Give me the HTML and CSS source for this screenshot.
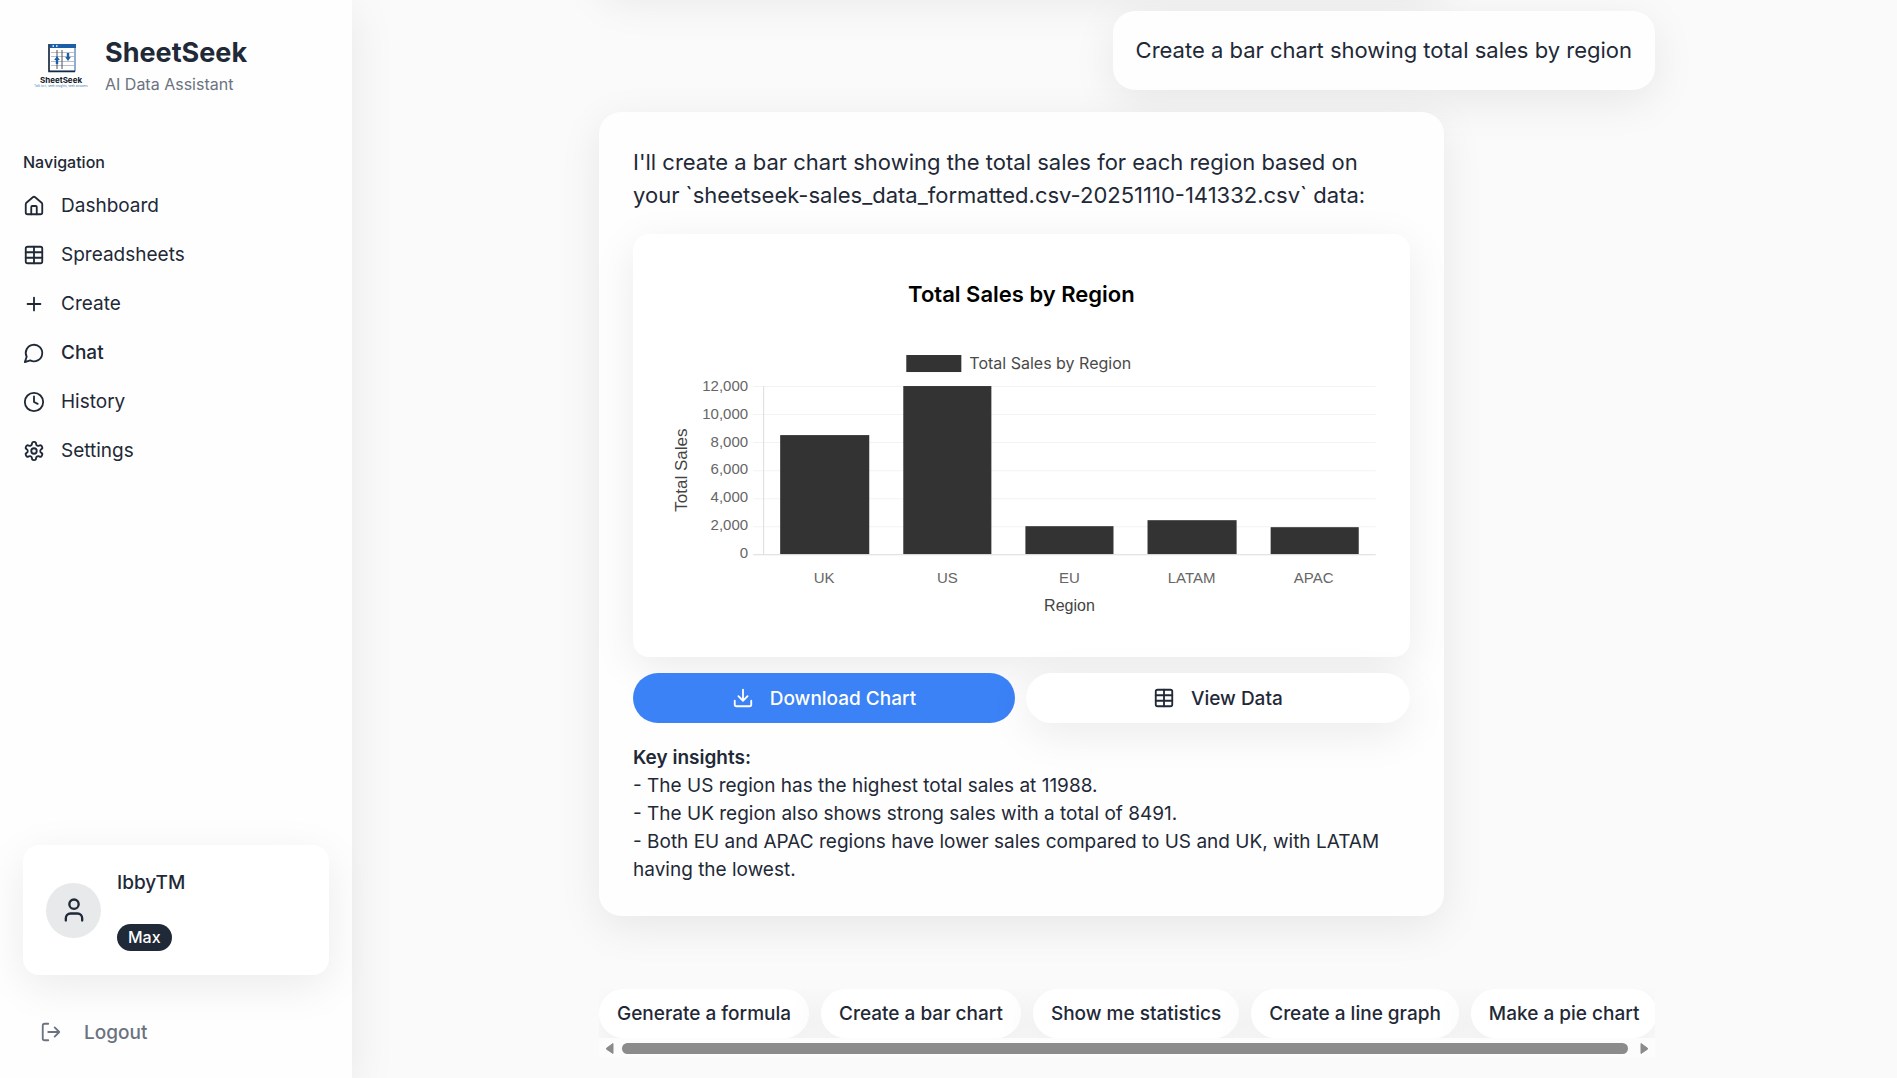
FILE: index.html
```html
<!DOCTYPE html>
<html lang="en">
<head>
<meta charset="utf-8">
<meta name="viewport" content="width=device-width, initial-scale=1">
<title>SheetSeek – Chat</title>
<link rel="stylesheet" href="styles.css">
</head>
<body>
<div class="app">
  <aside class="sidebar">
    <header class="brand">
      <svg class="brand-logo" viewBox="0 0 55 55" aria-hidden="true">
        <rect x="15" y="7" width="26" height="26" fill="#fff" stroke="#1b5fa8" stroke-width="1"/>
        <path d="M15 6v27.500h26" fill="none" stroke="#1f2937" stroke-width="1.500"/>
        <rect x="16" y="6" width="26" height="4" fill="#1b5fa8"/>
        <path d="M18.500 8h1.500M22 8h1.500" stroke="#fff" stroke-width="1.500"/>
        <path d="M17 14.500h23M17 18.500h23M17 23.500h23M17 27.500h23" stroke="#9ca3af" stroke-width=".7"/>
        <path d="M23 12v19M28 12v19" stroke="#4b5563" stroke-width="1"/>
        <path d="M23 26v-5M34 15v5" stroke="#1b5fa8" stroke-width="2.400"/>
        <path d="M20.200 22l2.800-4 2.800 4zM31.200 19l2.800 4 2.800-4z" fill="#1b5fa8"/>
        <text x="27" y="45" class="logo-name" text-anchor="middle">SheetSeek</text>
        <text x="27" y="49" class="logo-tag" text-anchor="middle">Talk to it, seek insights, seek answers</text>
      </svg>
      <div>
        <h1 class="brand-name">SheetSeek</h1>
        <p class="brand-sub">AI Data Assistant</p>
      </div>
    </header>

    <nav class="nav" aria-labelledby="nav-title">
      <h2 class="nav-title" id="nav-title">Navigation</h2>
      <a class="nav-link" href="#dashboard">
        <svg class="icon" viewBox="0 0 24 24" aria-hidden="true"><path d="M15 21v-8a1 1 0 0 0-1-1h-4a1 1 0 0 0-1 1v8"/><path d="M3 10a2 2 0 0 1 .709-1.528l7-5.999a2 2 0 0 1 2.582 0l7 5.999A2 2 0 0 1 21 10v9a2 2 0 0 1-2 2H5a2 2 0 0 1-2-2z"/></svg>
        Dashboard
      </a>
      <a class="nav-link" href="#spreadsheets">
        <svg class="icon" viewBox="0 0 24 24" aria-hidden="true"><path d="M12 3v18"/><rect width="18" height="18" x="3" y="3" rx="2"/><path d="M3 9h18M3 15h18"/></svg>
        Spreadsheets
      </a>
      <a class="nav-link" href="#create">
        <svg class="icon" viewBox="0 0 24 24" aria-hidden="true"><path d="M5 12h14M12 5v14"/></svg>
        Create
      </a>
      <a class="nav-link nav-link-active" href="#chat" aria-current="page">
        <svg class="icon" viewBox="0 0 24 24" aria-hidden="true"><path d="M7.900 20A9 9 0 1 0 4 16.100L2 22Z"/></svg>
        Chat
      </a>
      <a class="nav-link" href="#history">
        <svg class="icon" viewBox="0 0 24 24" aria-hidden="true"><circle cx="12" cy="12" r="10"/><path d="M12 6v6l4 2"/></svg>
        History
      </a>
      <a class="nav-link" href="#settings">
        <svg class="icon" viewBox="0 0 24 24" aria-hidden="true"><path d="M12.220 2h-.44a2 2 0 0 0-2 2v.18a2 2 0 0 1-1 1.730l-.43.25a2 2 0 0 1-2 0l-.15-.08a2 2 0 0 0-2.730.73l-.22.38a2 2 0 0 0 .73 2.730l.15.1a2 2 0 0 1 1 1.720v.51a2 2 0 0 1-1 1.740l-.15.09a2 2 0 0 0-.73 2.730l.22.38a2 2 0 0 0 2.730.73l.15-.08a2 2 0 0 1 2 0l.43.25a2 2 0 0 1 1 1.730V20a2 2 0 0 0 2 2h.44a2 2 0 0 0 2-2v-.18a2 2 0 0 1 1-1.730l.43-.25a2 2 0 0 1 2 0l.15.08a2 2 0 0 0 2.730-.73l.22-.39a2 2 0 0 0-.73-2.730l-.15-.08a2 2 0 0 1-1-1.740v-.5a2 2 0 0 1 1-1.740l.15-.09a2 2 0 0 0 .73-2.730l-.22-.38a2 2 0 0 0-2.730-.73l-.15.08a2 2 0 0 1-2 0l-.43-.25a2 2 0 0 1-1-1.730V4a2 2 0 0 0-2-2z"/><circle cx="12" cy="12" r="3"/></svg>
        Settings
      </a>
    </nav>

    <section class="profile" aria-label="Account">
      <span class="avatar">
        <svg class="icon icon-lg" viewBox="0 0 24 24" aria-hidden="true"><path d="M19 21v-2a4 4 0 0 0-4-4H9a4 4 0 0 0-4 4v2"/><circle cx="12" cy="7" r="4"/></svg>
      </span>
      <div class="profile-info">
        <span class="profile-name">IbbyTM</span>
        <span class="badge">Max</span>
      </div>
    </section>
    <button class="logout" type="button">
      <svg class="icon" viewBox="0 0 24 24" aria-hidden="true"><path d="M9 21H5a2 2 0 0 1-2-2V5a2 2 0 0 1 2-2h4"/><path d="m16 17 5-5-5-5M21 12H9"/></svg>
      Logout
    </button>
  </aside>

  <main class="chat">
    <div class="column">
      <div class="thread">
        <article class="message message-bot message-past"></article>
        <article class="message message-user">Create a bar chart showing total sales by region</article>
        <article class="message message-bot">
          <p>I'll create a bar chart showing the total sales for each region based on your `sheetseek-sales_data_formatted.csv-20251110-141332.csv` data:</p>
          <figure class="chart-card">
            <figcaption class="chart-title">Total Sales by Region</figcaption>
            <svg class="chart" viewBox="0 0 776 270" role="img" aria-label="Bar chart of total sales by region">
              <g class="grid">
                <path d="M120 47.500h622M120 75.500h622M120 103.500h622M120 131.500h622M120 159.500h622M120 187.500h622"/>
              </g>
              <rect class="bar" x="273" y="16" width="55" height="17"/>
              <text class="legend" x="336" y="30">Total Sales by Region</text>
              <g class="bars">
                <rect class="bar" x="147" y="96" width="89" height="119"/>
                <rect class="bar" x="270" y="47" width="88" height="168"/>
                <rect class="bar" x="392" y="187" width="88" height="28"/>
                <rect class="bar" x="514" y="181" width="89" height="34"/>
                <rect class="bar" x="637" y="188" width="88" height="27"/>
              </g>
              <path class="axis" d="M130.500 47v168M120 215.500h622"/>
              <g class="ticks ticks-y">
                <text x="115" y="52">12,000</text>
                <text x="115" y="80">10,000</text>
                <text x="115" y="108">8,000</text>
                <text x="115" y="135">6,000</text>
                <text x="115" y="163">4,000</text>
                <text x="115" y="191">2,000</text>
                <text x="115" y="219">0</text>
              </g>
              <g class="ticks ticks-x">
                <text x="191" y="244">UK</text>
                <text x="314" y="244">US</text>
                <text x="436" y="244">EU</text>
                <text x="558" y="244">LATAM</text>
                <text x="680" y="244">APAC</text>
              </g>
              <text class="axis-title" x="436" y="272">Region</text>
              <text class="axis-title axis-title-y" transform="translate(54 131) rotate(-90)">Total Sales</text>
            </svg>
          </figure>
          <div class="actions">
            <button class="btn btn-primary" type="button">
              <svg class="icon" viewBox="0 0 24 24" aria-hidden="true"><path d="M21 15v4a2 2 0 0 1-2 2H5a2 2 0 0 1-2-2v-4"/><path d="m7 10 5 5 5-5M12 15V3"/></svg>
              Download Chart
            </button>
            <button class="btn btn-plain" type="button">
              <svg class="icon" viewBox="0 0 24 24" aria-hidden="true"><path d="M12 3v18"/><rect width="18" height="18" x="3" y="3" rx="2"/><path d="M3 9h18M3 15h18"/></svg>
              View Data
            </button>
          </div>
          <div class="insights">
            <strong>Key insights:</strong><br>
            - The US region has the highest total sales at 11988.<br>
            - The UK region also shows strong sales with a total of 8491.<br>
            - Both EU and APAC regions have lower sales compared to US and UK, with LATAM having the lowest.
          </div>
        </article>
      </div>

      <div class="suggestions">
        <div class="chips">
          <button class="chip" type="button">Generate a formula</button>
          <button class="chip" type="button">Create a bar chart</button>
          <button class="chip" type="button">Show me statistics</button>
          <button class="chip" type="button">Create a line graph</button>
          <button class="chip" type="button">Make a pie chart</button>
        </div>
        <div class="scrollbar" aria-hidden="true">
          <svg class="scroll-arrow" viewBox="0 0 9 13"><path d="M8 1.500v10L1.500 7.200v-1z"/></svg>
          <span class="scroll-thumb"></span>
          <svg class="scroll-arrow" viewBox="0 0 9 13"><path d="M1 1.500v10l6.500-4.300v-1z"/></svg>
        </div>
      </div>
    </div>
  </main>
</div>
</body>
</html>
```
FILE: styles.css
```css
:root {
  --ink: #1f2937;
  --muted: #6b7280;
  --page: #fafafa;
  --surface: #fefefe;
  --shadow: 0 11px 44px rgba(0, 0, 0, 0.08);
}

* {
  box-sizing: border-box;
}

body {
  margin: 0;
  background: var(--page);
  color: var(--ink);
  font-family: Inter, "Liberation Sans", sans-serif;
  font-size: 19px;
}

h1, h2, p, figure {
  margin: 0;
}

button {
  border: 0;
  font: inherit;
  font-weight: 500;
  color: inherit;
  cursor: pointer;
}

.app {
  display: flex;
  height: 100vh;
  overflow: hidden;
}

.icon {
  flex: none;
  width: 22px;
  height: 22px;
  fill: none;
  stroke: currentColor;
  stroke-width: 2;
  stroke-linecap: round;
  stroke-linejoin: round;
}

.icon-lg {
  width: 28px;
  height: 28px;
}

/* Sidebar */

.sidebar {
  position: relative;
  z-index: 1;
  flex: none;
  display: flex;
  flex-direction: column;
  width: 352px;
  padding: 34px 23px 21px;
  background: var(--surface);
  box-shadow: var(--shadow);
}

.brand {
  display: flex;
  align-items: center;
  gap: 16px;
  padding-left: 11px;
}

.brand-logo {
  flex: none;
  width: 55px;
  height: 55px;
}

.logo-name {
  font-size: 8px;
  font-weight: 700;
  fill: #111827;
}

.logo-tag {
  font-size: 3px;
  fill: #3b7fb8;
}

.brand-name {
  font-size: 27px;
  line-height: 38px;
  font-weight: 700;
}

.brand-sub {
  font-size: 16px;
  line-height: 24px;
  color: var(--muted);
}

.nav {
  display: flex;
  flex-direction: column;
  margin-top: 52px;
}

.nav-title {
  margin-bottom: 5px;
  font-size: 16px;
  line-height: 28px;
  font-weight: 500;
}

.nav-link {
  display: flex;
  align-items: center;
  gap: 16px;
  height: 49px;
  color: inherit;
  text-decoration: none;
}

.nav-link-active {
  font-weight: 500;
}

.profile {
  display: flex;
  align-items: center;
  gap: 16px;
  height: 130px;
  margin-top: auto;
  padding: 22px 23px;
  border-radius: 16px;
  background: #fff;
  box-shadow: var(--shadow);
}

.avatar {
  display: grid;
  place-items: center;
  width: 55px;
  height: 55px;
  border-radius: 50%;
  background: #e8e9eb;
}

.profile-info {
  display: flex;
  flex-direction: column;
  align-items: flex-start;
  gap: 27px;
}

.profile-name {
  line-height: 28px;
  font-weight: 500;
}

.badge {
  padding: 0 11px;
  border-radius: 14px;
  background: var(--ink);
  color: #fff;
  font-size: 16px;
  line-height: 27px;
  font-weight: 500;
}

.logout {
  display: flex;
  align-items: center;
  gap: 22px;
  height: 50px;
  margin-top: 32px;
  padding: 0 17px;
  background: none;
  color: var(--muted);
}

/* Chat */

.chat {
  flex: 1;
  min-width: 0;
  display: flex;
  justify-content: center;
  padding: 0 17px 20px 22px;
}

.column {
  display: flex;
  flex-direction: column;
  width: 100%;
  max-width: 1056px;
}

.thread {
  flex: 1;
  min-height: 0;
  display: flex;
  flex-direction: column;
  justify-content: flex-end;
  gap: 22px;
  padding-bottom: 73px;
}

.message {
  flex: none;
  border-radius: 22px;
  background: var(--surface);
  box-shadow: var(--shadow);
  font-size: 22px;
  line-height: 33px;
}

.message-user {
  align-self: flex-end;
  padding: 23px;
}

.message-bot {
  align-self: flex-start;
  width: 80%;
  padding: 34px 34px 32px;
}

.message-past {
  min-height: 300px;
}

.chart-card {
  margin-top: 22px;
  padding: 44px 0 48px;
  border-radius: 16px;
  background: #fff;
  box-shadow: var(--shadow);
}

.chart-title {
  margin-bottom: 28px;
  color: #000;
  font-weight: 600;
  text-align: center;
}

.chart {
  display: block;
  width: 100%;
  overflow: visible;
}

.grid path {
  stroke: #f3f3f3;
  stroke-width: 1;
}

.axis {
  fill: none;
  stroke: #dcdcdc;
  stroke-width: 1;
}

.bar {
  fill: #333;
}

.legend {
  fill: #4a4a4a;
  font-size: 16px;
}

.ticks {
  fill: #666;
  font-family: "Liberation Sans", Arial, sans-serif;
  font-size: 15px;
}

.ticks-y {
  text-anchor: end;
}

.ticks-x {
  text-anchor: middle;
}

.axis-title {
  fill: #444;
  font-family: "Liberation Sans", Arial, sans-serif;
  font-size: 16px;
  text-anchor: middle;
}

.axis-title-y {
  font-size: 17px;
}

.actions {
  display: flex;
  gap: 11px;
  margin-top: 16px;
}

.btn {
  flex: 1;
  display: flex;
  align-items: center;
  justify-content: center;
  gap: 16px;
  height: 50px;
  border-radius: 25px;
  font-size: 19px;
}

.btn-primary {
  background: #3b82f6;
  color: #fff;
}

.btn-plain {
  border: 1px solid #fff;
  background: #fff;
  box-shadow: var(--shadow);
}

.insights {
  margin-top: 21px;
  font-size: 19px;
  line-height: 28px;
}

.insights strong {
  font-weight: 600;
}

/* Suggestions */

.suggestions {
  overflow: hidden;
  background: #fcfcfc;
}

.chips {
  display: flex;
  gap: 12px;
  overflow: hidden;
}

.chip {
  flex: none;
  height: 49px;
  padding: 0 18px;
  border-radius: 25px;
  background: #fff;
  box-shadow: var(--shadow);
  white-space: nowrap;
}

.scrollbar {
  display: flex;
  align-items: center;
  gap: 8px;
  height: 20px;
  padding: 0 6px;
}

.scroll-arrow {
  width: 9px;
  height: 13px;
  fill: #8b8b8b;
  stroke: #8b8b8b;
  stroke-linejoin: round;
}

.scroll-thumb {
  flex: 1;
  height: 11px;
  margin-right: 4px;
  border-radius: 6px;
  background: #8b8b8b;
}
```
